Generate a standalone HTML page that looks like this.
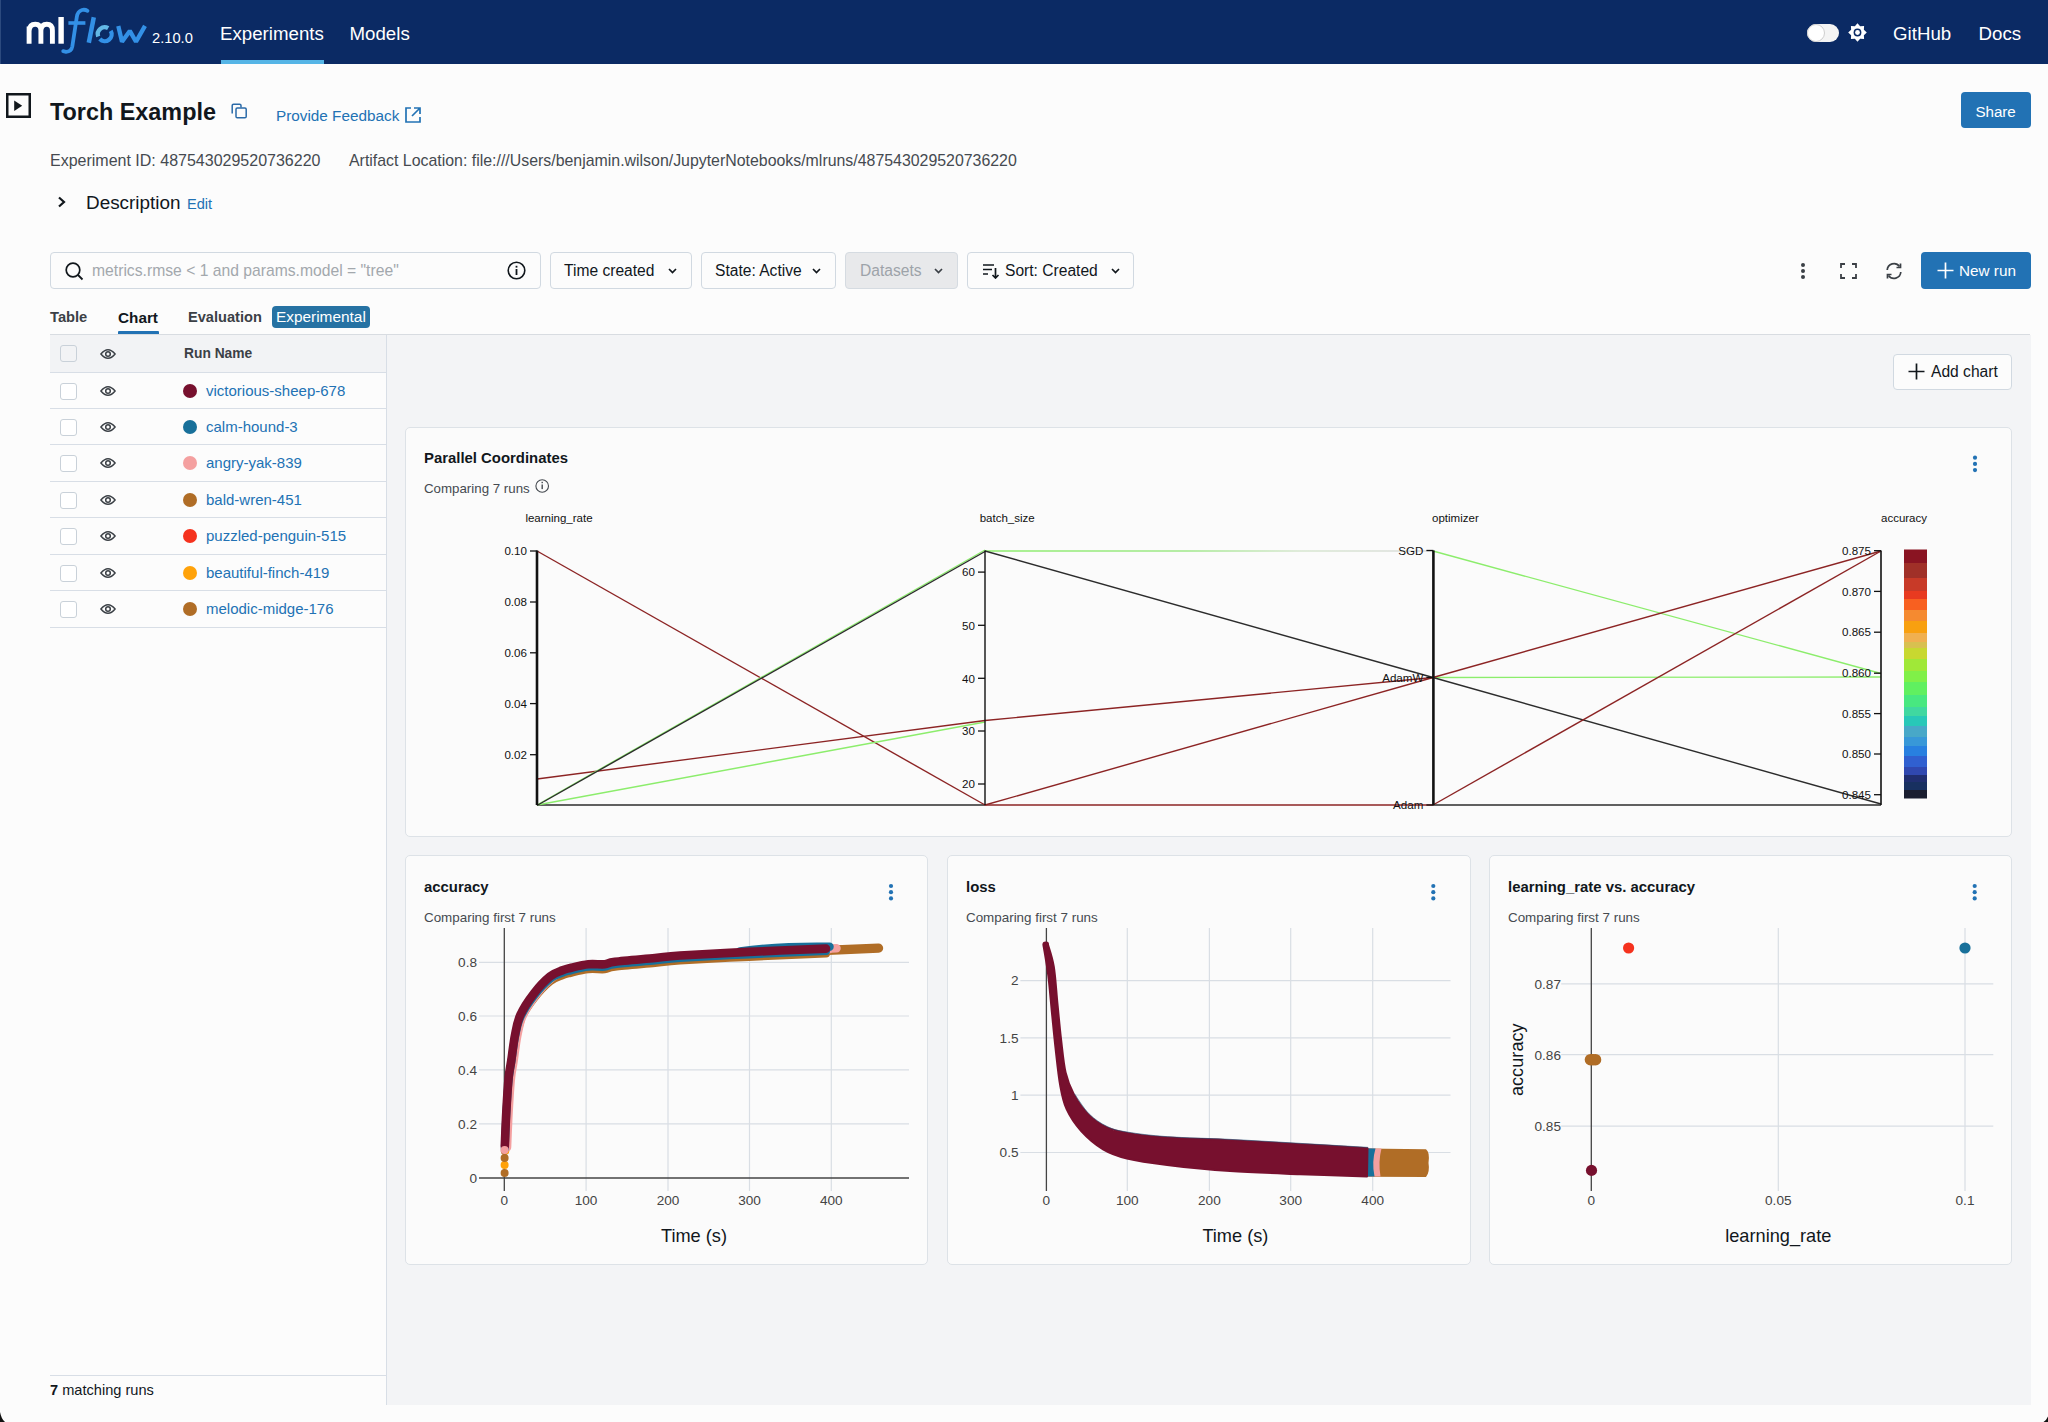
<!DOCTYPE html>
<html><head><meta charset="utf-8">
<style>
*{box-sizing:border-box;margin:0;padding:0}
html,body{width:2048px;height:1422px;overflow:hidden;background:#fcfcfc;font-family:"Liberation Sans",sans-serif;color:#11171c}
.a{position:absolute;white-space:nowrap}
#hdr{position:absolute;left:0;top:0;width:2048px;height:64px;background:#0b2a64}
.nav{color:#fff;font-size:18.7px;line-height:20px;margin-top:1px}
.btn{position:absolute;border:1px solid #d1d9e1;border-radius:4px;background:#fcfcfc}
.bt{position:absolute;font-size:15.6px;line-height:18px;color:#11171c;white-space:nowrap}
.chev{position:absolute;width:9px;height:6px}
.row{position:absolute;left:50px;width:336px;height:36.5px;border-bottom:1px solid #d8dee6}
.cb{position:absolute;left:59.5px;width:17px;height:17px;border:1.5px solid #c9d1d9;border-radius:3px;background:#fff}
.eye{position:absolute;left:100px;width:16px;height:12px}
.dot{position:absolute;left:183px;width:14px;height:14px;border-radius:50%}
.rn{position:absolute;left:206px;font-size:15px;line-height:18px;color:#2272b4;white-space:nowrap}
.card{position:absolute;background:#fbfbfb;border:1px solid #dde2e7;border-radius:5px}
.ct{position:absolute;font-weight:bold;font-size:14.5px;line-height:17px;color:#11171c;white-space:nowrap}
.cs{position:absolute;font-size:13.4px;line-height:16px;color:#454a50;white-space:nowrap}
.keb{position:absolute;width:4px;height:16px}
.keb i{position:absolute;left:0;width:4px;height:4px;border-radius:50%;background:#2272b4}
</style></head><body>

<!-- HEADER -->
<div id="hdr">
  <div class="a" style="left:0;top:0;width:1px;height:64px;background:#2c4a7e"></div>
  <!-- logo -->
  <svg class="a" style="left:0;top:0" width="150" height="64" viewBox="0 0 150 64">
    <path d="M29.1,43.7 V26.5 M29.1,31 Q29.5,24.3 35.3,24.3 Q40.9,24.3 40.9,30.5 V43.7 M40.9,30.5 Q41.2,24.3 46.8,24.3 Q52.4,24.3 52.4,30.5 V43.7" fill="none" stroke="#fff" stroke-width="4.9"/>
    <rect x="58.4" y="17" width="5.4" height="26.7" fill="#fff"/>
    <path d="M87.5,10.8 Q85,9.3 82,10 Q77.6,11.3 76.8,17 L72.3,46.5 Q71.4,51.6 66,51.8 L63.2,51.2" fill="none" stroke="#3390e6" stroke-width="3.8" stroke-linecap="round"/>
    <path d="M68.4,23 H85.4" stroke="#3390e6" stroke-width="3.6"/>
    <path d="M93.8,17.2 L88.8,42.7" stroke="#3390e6" stroke-width="4.5"/>
    <path d="M98.2,36.5 A6.9,6.9 0 0 1 108.2,28.2" fill="none" stroke="#63b8e6" stroke-width="4.3"/>
    <path d="M110.7,30.8 A6.9,6.9 0 0 1 99.8,39.1" fill="none" stroke="#3390e6" stroke-width="4.3"/>
    <path d="M118.3,25.9 L122,41.8 L129.8,30.9 L136,41.8 L145,25.9" fill="none" stroke="#3390e6" stroke-width="4.3" stroke-linejoin="bevel"/>
  </svg>
  <div class="a" style="left:152px;top:30px;font-size:14.7px;line-height:16px;color:#fff">2.10.0</div>
  <div class="a nav" style="left:220px;top:23px">Experiments</div>
  <div class="a" style="left:221px;top:60px;width:103px;height:4px;background:#55b5e6"></div>
  <div class="a nav" style="left:349.5px;top:23px">Models</div>
  <!-- toggle -->
  <div class="a" style="left:1807px;top:24px;width:32px;height:18px;border-radius:9px;background:#f4f4f4"></div>
  <div class="a" style="left:1807px;top:24px;width:18px;height:18px;border-radius:50%;background:#fff;border:1px solid #cfcfcf"></div>
  <svg class="a" style="left:1848px;top:23px" width="19" height="19" viewBox="0 0 19 19">
    <polygon fill="#fff" points="9.50,0.20 6.86,3.13 2.92,2.92 3.13,6.86 0.20,9.50 3.13,12.14 2.92,16.08 6.86,15.87 9.50,18.80 12.14,15.87 16.08,16.08 15.87,12.14 18.80,9.50 15.87,6.86 16.08,2.92 12.14,3.13"/>
    <circle cx="9.5" cy="9.5" r="3.9" fill="#0b2a64"/><circle cx="9.5" cy="9.5" r="2.4" fill="#fff"/>
  </svg>
  <div class="a nav" style="left:1893px;top:23px">GitHub</div>
  <div class="a nav" style="left:1978.5px;top:23px">Docs</div>
</div>

<!-- PAGE HEADER -->
<svg class="a" style="left:6px;top:93px" width="25" height="25" viewBox="0 0 25 25">
  <rect x="1.25" y="1.25" width="22.5" height="22.5" fill="none" stroke="#11171c" stroke-width="2.5"/>
  <polygon points="8.2,7.6 8.2,18 16.2,12.8" fill="#11171c"/>
</svg>
<div class="a" style="left:50px;top:99px;font-size:23.4px;line-height:27px;font-weight:bold;color:#11171c">Torch Example</div>
<svg class="a" style="left:231px;top:103px" width="17" height="16" viewBox="0 0 17 16">
  <path d="M1.2,10.5 V2.6 Q1.2,1.2 2.6,1.2 H8.6 Q10,1.2 10,2.6 V4.6" fill="none" stroke="#2a6aa8" stroke-width="1.5"/>
  <rect x="5" y="5" width="10.2" height="9.8" rx="1.3" fill="none" stroke="#2a6aa8" stroke-width="1.5"/>
</svg>
<div class="a" style="left:276px;top:107px;font-size:15.3px;line-height:18px;color:#2272b4">Provide Feedback</div>
<svg class="a" style="left:404px;top:106px" width="18" height="18" viewBox="0 0 18 18">
  <path d="M7,2 H2 V16 H16 V11" fill="none" stroke="#2272b4" stroke-width="1.7"/>
  <path d="M10,2 H16 V8 M16,2 L8,10" fill="none" stroke="#2272b4" stroke-width="1.7"/>
</svg>
<div class="a" style="left:1961px;top:92px;width:70px;height:36px;background:#2272b4;border-radius:4px"></div>
<div class="a" style="left:1975.5px;top:103px;font-size:15.2px;line-height:17px;color:#fff;letter-spacing:-0.1px">Share</div>

<div class="a" style="left:50px;top:152.5px;font-size:16px;line-height:16px;color:#454a50">Experiment ID: 487543029520736220</div>
<div class="a" style="left:349px;top:152.5px;font-size:15.9px;line-height:16px;color:#454a50">Artifact Location: file:///Users/benjamin.wilson/JupyterNotebooks/mlruns/487543029520736220</div>

<svg class="a" style="left:57px;top:196px" width="10" height="12" viewBox="0 0 10 12">
  <path d="M2,1.5 L7,6 L2,10.5" fill="none" stroke="#11171c" stroke-width="2.2"/>
</svg>
<div class="a" style="left:86px;top:193px;font-size:18.9px;line-height:20px;color:#11171c">Description</div>
<div class="a" style="left:187px;top:196px;font-size:14.6px;line-height:17px;color:#2272b4">Edit</div>

<!-- TOOLBAR -->
<div class="btn" style="left:50px;top:252px;width:491px;height:37px"></div>
<svg class="a" style="left:65px;top:262px" width="19" height="19" viewBox="0 0 19 19">
  <circle cx="8" cy="8" r="6.8" fill="none" stroke="#11171c" stroke-width="1.7"/>
  <path d="M13,13 L17.5,17.5" stroke="#11171c" stroke-width="1.8"/>
</svg>
<div class="a" style="left:92px;top:262px;font-size:15.7px;line-height:18px;color:#a3a8ad">metrics.rmse &lt; 1 and params.model = "tree"</div>
<svg class="a" style="left:507px;top:261px" width="19" height="19" viewBox="0 0 19 19">
  <circle cx="9.5" cy="9.5" r="8.3" fill="none" stroke="#11171c" stroke-width="1.6"/>
  <rect x="8.6" y="8" width="1.8" height="6" fill="#11171c"/><rect x="8.6" y="4.8" width="1.8" height="1.8" fill="#11171c"/>
</svg>

<div class="btn" style="left:550px;top:252px;width:142px;height:37px"></div>
<div class="bt" style="left:564px;top:262px">Time created</div>
<svg class="chev" style="left:668px;top:268px" viewBox="0 0 9 6"><path d="M1,1 L4.5,4.5 L8,1" fill="none" stroke="#11171c" stroke-width="1.7"/></svg>

<div class="btn" style="left:701px;top:252px;width:135px;height:37px"></div>
<div class="bt" style="left:715px;top:262px">State: Active</div>
<svg class="chev" style="left:812px;top:268px" viewBox="0 0 9 6"><path d="M1,1 L4.5,4.5 L8,1" fill="none" stroke="#11171c" stroke-width="1.7"/></svg>

<div class="btn" style="left:845px;top:252px;width:113px;height:37px;background:#e8e9eb;border-color:#d5dbe1"></div>
<div class="bt" style="left:860px;top:262px;color:#9da3a9">Datasets</div>
<svg class="chev" style="left:934px;top:268px" viewBox="0 0 9 6"><path d="M1,1 L4.5,4.5 L8,1" fill="none" stroke="#3b4046" stroke-width="1.7"/></svg>

<div class="btn" style="left:967px;top:252px;width:167px;height:37px"></div>
<svg class="a" style="left:982px;top:263px" width="18" height="16" viewBox="0 0 18 16">
  <path d="M1,2 H12 M1,6.5 H10 M1,11 H6" stroke="#11171c" stroke-width="1.7"/>
  <path d="M13.5,5 V15 M10.5,12 L13.5,15 L16.5,12" fill="none" stroke="#11171c" stroke-width="1.7"/>
</svg>
<div class="bt" style="left:1005px;top:262px">Sort: Created</div>
<svg class="chev" style="left:1111px;top:268px" viewBox="0 0 9 6"><path d="M1,1 L4.5,4.5 L8,1" fill="none" stroke="#11171c" stroke-width="1.7"/></svg>

<!-- right icons -->
<div class="a" style="left:1800.5px;top:262.5px;width:4.5px;height:4.5px;border-radius:50%;background:#3b4046"></div>
<div class="a" style="left:1800.5px;top:268.5px;width:4.5px;height:4.5px;border-radius:50%;background:#3b4046"></div>
<div class="a" style="left:1800.5px;top:274.5px;width:4.5px;height:4.5px;border-radius:50%;background:#3b4046"></div>
<svg class="a" style="left:1840px;top:263px" width="17" height="16" viewBox="0 0 17 16">
  <path d="M1,5 V1 H5 M12,1 H16 V5 M16,11 V15 H12 M5,15 H1 V11" fill="none" stroke="#3b4046" stroke-width="1.8"/>
</svg>
<svg class="a" style="left:1885px;top:262px" width="18" height="18" viewBox="0 0 18 18">
  <path d="M2.2,8 A6.8,6.8 0 0 1 14.5,4.5" fill="none" stroke="#3b4046" stroke-width="1.7"/>
  <path d="M15.8,10 A6.8,6.8 0 0 1 3.5,13.5" fill="none" stroke="#3b4046" stroke-width="1.7"/>
  <path d="M15.5,1.5 V5.5 H11.5" fill="none" stroke="#3b4046" stroke-width="1.7"/>
  <path d="M2.5,16.5 V12.5 H6.5" fill="none" stroke="#3b4046" stroke-width="1.7"/>
</svg>
<div class="a" style="left:1921px;top:252px;width:110px;height:37px;background:#2272b4;border-radius:4px"></div>
<svg class="a" style="left:1937px;top:262px" width="17" height="17" viewBox="0 0 17 17">
  <path d="M8.5,0.5 V16.5 M0.5,8.5 H16.5" stroke="#fff" stroke-width="1.7"/>
</svg>
<div class="a" style="left:1959px;top:262px;font-size:15.3px;line-height:18px;color:#fff">New run</div>

<!-- TABS -->
<div class="a" style="left:50px;top:308.5px;font-size:14.7px;line-height:17px;font-weight:bold;color:#3b4046">Table</div>
<div class="a" style="left:118px;top:308.5px;font-size:15.3px;line-height:17px;font-weight:bold;color:#11171c">Chart</div>
<div class="a" style="left:118px;top:331px;width:41px;height:4px;background:#2272b4;border-radius:1px"></div>
<div class="a" style="left:188px;top:308.5px;font-size:14.6px;line-height:17px;font-weight:bold;color:#3b4046">Evaluation</div>
<div class="a" style="left:272px;top:305.5px;width:98px;height:22.5px;background:#2672a3;border-radius:4px"></div>
<div class="a" style="left:276px;top:308px;font-size:15.4px;line-height:17px;color:#fff">Experimental</div>
<div class="a" style="left:50px;top:334px;width:1980px;height:1px;background:#d8dce1"></div>

<!-- LEFT TABLE -->
<div class="a" style="left:50px;top:335px;width:336px;height:37.5px;background:#f2f3f5;border-bottom:1px solid #d8dee6"></div>
<div class="a" style="left:386px;top:335px;width:1px;height:1070px;background:#d8dee6"></div>
<div class="cb" style="top:345px;background:#f2f3f5"></div>
<svg class="eye" style="top:347.5px" viewBox="0 0 16 12"><path d="M0.9,6 Q8,-2.6 15.1,6 Q8,14.6 0.9,6 Z" fill="none" stroke="#3b4046" stroke-width="1.5" stroke-linejoin="round"/><circle cx="8" cy="6" r="2.3" fill="none" stroke="#3b4046" stroke-width="1.5"/></svg>
<div class="a" style="left:184px;top:346px;font-size:13.8px;line-height:16px;font-weight:bold;color:#3b4046">Run Name</div>

<div class="row" style="top:372.50px"></div>
<div class="cb" style="top:382.50px"></div>
<svg class="eye" style="top:384.50px" viewBox="0 0 16 12"><path d="M0.9,6 Q8,-2.6 15.1,6 Q8,14.6 0.9,6 Z" fill="none" stroke="#3b4046" stroke-width="1.5" stroke-linejoin="round"/><circle cx="8" cy="6" r="2.3" fill="none" stroke="#3b4046" stroke-width="1.5"/></svg>
<div class="dot" style="top:383.50px;background:#77102e"></div>
<div class="rn" style="top:381.50px">victorious-sheep-678</div>
<div class="row" style="top:408.95px"></div>
<div class="cb" style="top:418.95px"></div>
<svg class="eye" style="top:420.95px" viewBox="0 0 16 12"><path d="M0.9,6 Q8,-2.6 15.1,6 Q8,14.6 0.9,6 Z" fill="none" stroke="#3b4046" stroke-width="1.5" stroke-linejoin="round"/><circle cx="8" cy="6" r="2.3" fill="none" stroke="#3b4046" stroke-width="1.5"/></svg>
<div class="dot" style="top:419.95px;background:#18709a"></div>
<div class="rn" style="top:417.95px">calm-hound-3</div>
<div class="row" style="top:445.40px"></div>
<div class="cb" style="top:455.40px"></div>
<svg class="eye" style="top:457.40px" viewBox="0 0 16 12"><path d="M0.9,6 Q8,-2.6 15.1,6 Q8,14.6 0.9,6 Z" fill="none" stroke="#3b4046" stroke-width="1.5" stroke-linejoin="round"/><circle cx="8" cy="6" r="2.3" fill="none" stroke="#3b4046" stroke-width="1.5"/></svg>
<div class="dot" style="top:456.40px;background:#f4a0a0"></div>
<div class="rn" style="top:454.40px">angry-yak-839</div>
<div class="row" style="top:481.85px"></div>
<div class="cb" style="top:491.85px"></div>
<svg class="eye" style="top:493.85px" viewBox="0 0 16 12"><path d="M0.9,6 Q8,-2.6 15.1,6 Q8,14.6 0.9,6 Z" fill="none" stroke="#3b4046" stroke-width="1.5" stroke-linejoin="round"/><circle cx="8" cy="6" r="2.3" fill="none" stroke="#3b4046" stroke-width="1.5"/></svg>
<div class="dot" style="top:492.85px;background:#b06d26"></div>
<div class="rn" style="top:490.85px">bald-wren-451</div>
<div class="row" style="top:518.30px"></div>
<div class="cb" style="top:528.30px"></div>
<svg class="eye" style="top:530.30px" viewBox="0 0 16 12"><path d="M0.9,6 Q8,-2.6 15.1,6 Q8,14.6 0.9,6 Z" fill="none" stroke="#3b4046" stroke-width="1.5" stroke-linejoin="round"/><circle cx="8" cy="6" r="2.3" fill="none" stroke="#3b4046" stroke-width="1.5"/></svg>
<div class="dot" style="top:529.30px;background:#f5321e"></div>
<div class="rn" style="top:527.30px">puzzled-penguin-515</div>
<div class="row" style="top:554.75px"></div>
<div class="cb" style="top:564.75px"></div>
<svg class="eye" style="top:566.75px" viewBox="0 0 16 12"><path d="M0.9,6 Q8,-2.6 15.1,6 Q8,14.6 0.9,6 Z" fill="none" stroke="#3b4046" stroke-width="1.5" stroke-linejoin="round"/><circle cx="8" cy="6" r="2.3" fill="none" stroke="#3b4046" stroke-width="1.5"/></svg>
<div class="dot" style="top:565.75px;background:#ffa20a"></div>
<div class="rn" style="top:563.75px">beautiful-finch-419</div>
<div class="row" style="top:591.20px"></div>
<div class="cb" style="top:601.20px"></div>
<svg class="eye" style="top:603.20px" viewBox="0 0 16 12"><path d="M0.9,6 Q8,-2.6 15.1,6 Q8,14.6 0.9,6 Z" fill="none" stroke="#3b4046" stroke-width="1.5" stroke-linejoin="round"/><circle cx="8" cy="6" r="2.3" fill="none" stroke="#3b4046" stroke-width="1.5"/></svg>
<div class="dot" style="top:602.20px;background:#b06d26"></div>
<div class="rn" style="top:600.20px">melodic-midge-176</div>

<div class="a" style="left:50px;top:1374.5px;width:336px;height:1px;background:#d8dee6"></div>
<div class="a" style="left:50px;top:1382px;font-size:14.6px;line-height:17px;color:#11171c"><b>7</b> matching runs</div>

<!-- CHART AREA -->
<div class="a" style="left:387px;top:335px;width:1644px;height:1070px;background:#f3f4f6"></div>
<div class="btn" style="left:1893px;top:354px;width:119px;height:36px"></div>
<svg class="a" style="left:1908px;top:363px" width="17" height="17" viewBox="0 0 17 17">
  <path d="M8.5,0.5 V16.5 M0.5,8.5 H16.5" stroke="#11171c" stroke-width="1.7"/>
</svg>
<div class="a" style="left:1931px;top:363px;font-size:15.6px;line-height:18px;color:#11171c">Add chart</div>

<div class="card" style="left:405px;top:427px;width:1607px;height:410px"></div>
<div class="card" style="left:405px;top:855px;width:523px;height:410px"></div>
<div class="card" style="left:946.5px;top:855px;width:524px;height:410px"></div>
<div class="card" style="left:1489px;top:855px;width:523px;height:410px"></div>

<div id="charts"><svg class="a" style="left:0;top:0" width="2048" height="1422" viewBox="0 0 2048 1422" font-family="Liberation Sans, sans-serif">
<defs><linearGradient id="cbar" x1="0" y1="0" x2="0" y2="1">
<stop offset="0.0" stop-color="#8a1422"/>
<stop offset="0.0532" stop-color="#8a1422"/>
<stop offset="0.0532" stop-color="#a03028"/>
<stop offset="0.1141" stop-color="#a03028"/>
<stop offset="0.1141" stop-color="#c83a28"/>
<stop offset="0.1673" stop-color="#c83a28"/>
<stop offset="0.1673" stop-color="#e83a20"/>
<stop offset="0.1977" stop-color="#e83a20"/>
<stop offset="0.1977" stop-color="#f86020"/>
<stop offset="0.2433" stop-color="#f86020"/>
<stop offset="0.2433" stop-color="#f58a30"/>
<stop offset="0.289" stop-color="#f58a30"/>
<stop offset="0.289" stop-color="#f8a010"/>
<stop offset="0.3346" stop-color="#f8a010"/>
<stop offset="0.3346" stop-color="#f0b050"/>
<stop offset="0.3726" stop-color="#f0b050"/>
<stop offset="0.3726" stop-color="#d8c050"/>
<stop offset="0.3954" stop-color="#d8c050"/>
<stop offset="0.3954" stop-color="#c8d830"/>
<stop offset="0.4411" stop-color="#c8d830"/>
<stop offset="0.4411" stop-color="#a0e838"/>
<stop offset="0.4867" stop-color="#a0e838"/>
<stop offset="0.4867" stop-color="#80f048"/>
<stop offset="0.5323" stop-color="#80f048"/>
<stop offset="0.5323" stop-color="#60f060"/>
<stop offset="0.5856" stop-color="#60f060"/>
<stop offset="0.5856" stop-color="#48e880"/>
<stop offset="0.6312" stop-color="#48e880"/>
<stop offset="0.6312" stop-color="#40d8a0"/>
<stop offset="0.6692" stop-color="#40d8a0"/>
<stop offset="0.6692" stop-color="#28c8b8"/>
<stop offset="0.7072" stop-color="#28c8b8"/>
<stop offset="0.7072" stop-color="#48a8c8"/>
<stop offset="0.7529" stop-color="#48a8c8"/>
<stop offset="0.7529" stop-color="#3898d8"/>
<stop offset="0.7909" stop-color="#3898d8"/>
<stop offset="0.7909" stop-color="#2880e0"/>
<stop offset="0.8289" stop-color="#2880e0"/>
<stop offset="0.8289" stop-color="#3060d0"/>
<stop offset="0.8745" stop-color="#3060d0"/>
<stop offset="0.8745" stop-color="#3048b0"/>
<stop offset="0.9049" stop-color="#3048b0"/>
<stop offset="0.9049" stop-color="#202e70"/>
<stop offset="0.9354" stop-color="#202e70"/>
<stop offset="0.9354" stop-color="#183060"/>
<stop offset="0.9658" stop-color="#183060"/>
<stop offset="0.9658" stop-color="#1a1e30"/>
<stop offset="1.0" stop-color="#1a1e30"/>
</linearGradient><linearGradient id="gfade" gradientUnits="userSpaceOnUse" x1="985" y1="0" x2="1433" y2="0"><stop offset="0" stop-color="#8ced6c"/><stop offset="0.45" stop-color="#9fe889"/><stop offset="0.7" stop-color="#d6e6cf"/><stop offset="1" stop-color="#dcdcdc"/></linearGradient></defs>
<text x="424" y="463" font-size="14.9" font-weight="bold" fill="#11171c">Parallel Coordinates</text>
<text x="424" y="492.7" font-size="13.3" fill="#454a50">Comparing 7 runs</text>
<circle cx="542.2" cy="486" r="6.3" fill="none" stroke="#454a50" stroke-width="1.1"/><rect x="541.5" y="484.5" width="1.4" height="4.6" fill="#454a50"/><rect x="541.5" y="481.8" width="1.4" height="1.4" fill="#454a50"/>
<circle cx="1975" cy="457.7" r="2.1" fill="#2272b4"/>
<circle cx="1975" cy="463.9" r="2.1" fill="#2272b4"/>
<circle cx="1975" cy="470.1" r="2.1" fill="#2272b4"/>
<line x1="537" y1="805" x2="985" y2="805" stroke="#2c2c2c" stroke-width="1.4"/>
<line x1="537" y1="551" x2="985" y2="805" stroke="#8c2424" stroke-width="1.4"/>
<line x1="537" y1="805" x2="985" y2="722" stroke="#8ced6c" stroke-width="1.4"/>
<line x1="537" y1="779" x2="985" y2="720.5" stroke="#8c2424" stroke-width="1.4"/>
<line x1="537" y1="805" x2="985" y2="550" stroke="#8ced6c" stroke-width="1.4"/>
<line x1="537" y1="805.5" x2="985" y2="551.5" stroke="#2c2c2c" stroke-width="1.4"/>
<line x1="985" y1="551" x2="1433" y2="551.01" stroke="url(#gfade)" stroke-width="1.4"/>
<line x1="985" y1="805" x2="1433" y2="805" stroke="#8c2424" stroke-width="1.4"/>
<line x1="985" y1="551" x2="1433" y2="677.5" stroke="#2c2c2c" stroke-width="1.4"/>
<line x1="985" y1="720.5" x2="1433" y2="677.5" stroke="#8c2424" stroke-width="1.4"/>
<line x1="985" y1="805" x2="1433" y2="677.5" stroke="#8c2424" stroke-width="1.4"/>
<line x1="1433" y1="805" x2="1881" y2="805" stroke="#2c2c2c" stroke-width="1.4"/>
<line x1="1433" y1="551" x2="1881" y2="673.5" stroke="#8ced6c" stroke-width="1.4"/>
<line x1="1433" y1="677.5" x2="1881" y2="677" stroke="#8ced6c" stroke-width="1.4"/>
<line x1="1433" y1="677.5" x2="1881" y2="804" stroke="#2c2c2c" stroke-width="1.4"/>
<line x1="1433" y1="677.5" x2="1881" y2="551" stroke="#8c2424" stroke-width="1.4"/>
<line x1="1433" y1="805" x2="1881" y2="551" stroke="#8c2424" stroke-width="1.4"/>
<line x1="537" y1="550.5" x2="537" y2="805" stroke="#111" stroke-width="2.6"/>
<line x1="985" y1="550.5" x2="985" y2="805" stroke="#111" stroke-width="1.4"/>
<line x1="1433.4" y1="550.5" x2="1433.4" y2="805" stroke="#111" stroke-width="2.6"/>
<line x1="1881" y1="550.5" x2="1881" y2="805" stroke="#111" stroke-width="1.6"/>
<line x1="530" y1="551" x2="537" y2="551" stroke="#111" stroke-width="1.3"/>
<text x="527" y="555.2" font-size="11.6" text-anchor="end" fill="#111">0.10</text>
<line x1="530" y1="602" x2="537" y2="602" stroke="#111" stroke-width="1.3"/>
<text x="527" y="606.2" font-size="11.6" text-anchor="end" fill="#111">0.08</text>
<line x1="530" y1="652.8" x2="537" y2="652.8" stroke="#111" stroke-width="1.3"/>
<text x="527" y="657.0" font-size="11.6" text-anchor="end" fill="#111">0.06</text>
<line x1="530" y1="703.6" x2="537" y2="703.6" stroke="#111" stroke-width="1.3"/>
<text x="527" y="707.8" font-size="11.6" text-anchor="end" fill="#111">0.04</text>
<line x1="530" y1="754.7" x2="537" y2="754.7" stroke="#111" stroke-width="1.3"/>
<text x="527" y="758.9" font-size="11.6" text-anchor="end" fill="#111">0.02</text>
<line x1="978" y1="572.1" x2="985" y2="572.1" stroke="#111" stroke-width="1.3"/>
<text x="975" y="576.3" font-size="11.6" text-anchor="end" fill="#111">60</text>
<line x1="978" y1="625.3" x2="985" y2="625.3" stroke="#111" stroke-width="1.3"/>
<text x="975" y="629.5" font-size="11.6" text-anchor="end" fill="#111">50</text>
<line x1="978" y1="678.3" x2="985" y2="678.3" stroke="#111" stroke-width="1.3"/>
<text x="975" y="682.5" font-size="11.6" text-anchor="end" fill="#111">40</text>
<line x1="978" y1="731" x2="985" y2="731" stroke="#111" stroke-width="1.3"/>
<text x="975" y="735.2" font-size="11.6" text-anchor="end" fill="#111">30</text>
<line x1="978" y1="784" x2="985" y2="784" stroke="#111" stroke-width="1.3"/>
<text x="975" y="788.2" font-size="11.6" text-anchor="end" fill="#111">20</text>
<line x1="1426.4" y1="550.5" x2="1433.4" y2="550.5" stroke="#111" stroke-width="1.3"/>
<text x="1423.4" y="554.7" font-size="11.6" text-anchor="end" fill="#111">SGD</text>
<line x1="1426.4" y1="677.5" x2="1433.4" y2="677.5" stroke="#111" stroke-width="1.3"/>
<text x="1423.4" y="681.7" font-size="11.6" text-anchor="end" fill="#111">AdamW</text>
<line x1="1426.4" y1="805" x2="1433.4" y2="805" stroke="#111" stroke-width="1.3"/>
<text x="1423.4" y="809.2" font-size="11.6" text-anchor="end" fill="#111">Adam</text>
<line x1="1874" y1="550.7" x2="1881" y2="550.7" stroke="#111" stroke-width="1.3"/>
<text x="1871" y="554.9" font-size="11.6" text-anchor="end" fill="#111">0.875</text>
<line x1="1874" y1="591.4" x2="1881" y2="591.4" stroke="#111" stroke-width="1.3"/>
<text x="1871" y="595.6" font-size="11.6" text-anchor="end" fill="#111">0.870</text>
<line x1="1874" y1="632.2" x2="1881" y2="632.2" stroke="#111" stroke-width="1.3"/>
<text x="1871" y="636.4" font-size="11.6" text-anchor="end" fill="#111">0.865</text>
<line x1="1874" y1="673.2" x2="1881" y2="673.2" stroke="#111" stroke-width="1.3"/>
<text x="1871" y="677.4" font-size="11.6" text-anchor="end" fill="#111">0.860</text>
<line x1="1874" y1="713.6" x2="1881" y2="713.6" stroke="#111" stroke-width="1.3"/>
<text x="1871" y="717.8" font-size="11.6" text-anchor="end" fill="#111">0.855</text>
<line x1="1874" y1="754" x2="1881" y2="754" stroke="#111" stroke-width="1.3"/>
<text x="1871" y="758.2" font-size="11.6" text-anchor="end" fill="#111">0.850</text>
<line x1="1874" y1="794.7" x2="1881" y2="794.7" stroke="#111" stroke-width="1.3"/>
<text x="1871" y="798.9" font-size="11.6" text-anchor="end" fill="#111">0.845</text>
<text x="559" y="521.5" font-size="11.5" text-anchor="middle" fill="#111">learning_rate</text>
<text x="1007.2" y="521.5" font-size="11.5" text-anchor="middle" fill="#111">batch_size</text>
<text x="1455.4" y="521.5" font-size="11.5" text-anchor="middle" fill="#111">optimizer</text>
<text x="1904" y="521.5" font-size="11.5" text-anchor="middle" fill="#111">accuracy</text>
<rect x="1904" y="549.5" width="23" height="249" fill="url(#cbar)"/>
<text x="424" y="891.5" font-size="14.9" font-weight="bold" fill="#11171c">accuracy</text>
<text x="424" y="921.6" font-size="13.4" fill="#454a50">Comparing first 7 runs</text>
<circle cx="891" cy="886.0" r="2.1" fill="#2272b4"/>
<circle cx="891" cy="892.2" r="2.1" fill="#2272b4"/>
<circle cx="891" cy="898.4" r="2.1" fill="#2272b4"/>
<line x1="479" y1="962.3" x2="909" y2="962.3" stroke="#d9dee4" stroke-width="1.2"/>
<line x1="479" y1="1016" x2="909" y2="1016" stroke="#d9dee4" stroke-width="1.2"/>
<line x1="479" y1="1069.8" x2="909" y2="1069.8" stroke="#d9dee4" stroke-width="1.2"/>
<line x1="479" y1="1123.9" x2="909" y2="1123.9" stroke="#d9dee4" stroke-width="1.2"/>
<line x1="586.1" y1="928" x2="586.1" y2="1191" stroke="#d9dee4" stroke-width="1.2"/>
<line x1="668" y1="928" x2="668" y2="1191" stroke="#d9dee4" stroke-width="1.2"/>
<line x1="749.5" y1="928" x2="749.5" y2="1191" stroke="#d9dee4" stroke-width="1.2"/>
<line x1="831.3" y1="928" x2="831.3" y2="1191" stroke="#d9dee4" stroke-width="1.2"/>
<line x1="479" y1="1178" x2="909" y2="1178" stroke="#444" stroke-width="1.3"/>
<line x1="504.3" y1="928" x2="504.3" y2="1191" stroke="#444" stroke-width="1.3"/>
<text x="477" y="967.1" font-size="13.6" text-anchor="end" fill="#444">0.8</text>
<text x="477" y="1020.8" font-size="13.6" text-anchor="end" fill="#444">0.6</text>
<text x="477" y="1074.6" font-size="13.6" text-anchor="end" fill="#444">0.4</text>
<text x="477" y="1128.7" font-size="13.6" text-anchor="end" fill="#444">0.2</text>
<text x="477" y="1182.8" font-size="13.6" text-anchor="end" fill="#444">0</text>
<text x="504.3" y="1205.3" font-size="13.6" text-anchor="middle" fill="#444">0</text>
<text x="586.1" y="1205.3" font-size="13.6" text-anchor="middle" fill="#444">100</text>
<text x="668" y="1205.3" font-size="13.6" text-anchor="middle" fill="#444">200</text>
<text x="749.5" y="1205.3" font-size="13.6" text-anchor="middle" fill="#444">300</text>
<text x="831.3" y="1205.3" font-size="13.6" text-anchor="middle" fill="#444">400</text>
<text x="694" y="1242.3" font-size="18.2" text-anchor="middle" fill="#11171c">Time (s)</text>
<path d="M504.8,1151 C505.05,1145.33 505.67,1128.33 506.3,1117 C506.93,1105.67 507.78,1091.5 508.6,1083 C509.42,1074.5 510.13,1073.17 511.2,1066 C512.27,1058.83 513.47,1047.7 515,1040 C516.53,1032.3 517.23,1026.75 520.4,1019.8 C523.57,1012.85 529.05,1004.7 534,998.3 C538.95,991.9 545.35,985.23 550.1,981.4 C554.85,977.57 559.13,976.7 562.5,975.3 C565.87,973.9 566,974 570.3,973 C574.6,972 582.57,969.92 588.3,969.3 C594.03,968.68 600.25,969.72 604.7,969.3 C609.15,968.88 606.62,967.85 615,966.8 C623.38,965.75 644.17,964.05 655,963 C665.83,961.95 664.33,961.52 680,960.5 C695.67,959.48 724.67,958.05 749,956.9 C773.33,955.75 813.17,954.15 826,953.6" fill="none" stroke="#b06d26" stroke-width="8" stroke-linecap="round" stroke-linejoin="round"/>
<path d="M800,951.5 L878.5,948.1" fill="none" stroke="#b06d26" stroke-width="9.4" stroke-linecap="round"/>
<path d="M506.3,1151 C506.55,1145.33 507.17,1128.33 507.8,1117 C508.43,1105.67 509.28,1091.5 510.1,1083 C510.92,1074.5 511.63,1073.17 512.7,1066 C513.77,1058.83 514.97,1047.7 516.5,1040 C518.03,1032.3 521,1023.17 521.9,1019.8" fill="none" stroke="#ffa20a" stroke-width="6" stroke-linecap="round"/>
<path d="M507.3,1147 C507.55,1141.33 508.17,1124.33 508.8,1113 C509.43,1101.67 510.28,1087.5 511.1,1079 C511.92,1070.5 512.63,1069.17 513.7,1062 C514.77,1054.83 515.97,1043.7 517.5,1036 C519.03,1028.3 519.73,1022.75 522.9,1015.8 C526.07,1008.85 531.55,1000.7 536.5,994.3 C541.45,987.9 547.85,981.23 552.6,977.4 C557.35,973.57 561.63,972.7 565,971.3 C568.37,969.9 568.5,970 572.8,969 C577.1,968 585.07,965.92 590.8,965.3 C596.53,964.68 602.75,965.72 607.2,965.3 C611.65,964.88 609.12,963.85 617.5,962.8 C625.88,961.75 646.67,960.05 657.5,959 C668.33,957.95 666.83,957.52 682.5,956.5 C698.17,955.48 727.17,954.05 751.5,952.9 C775.83,951.75 815.67,950.15 828.5,949.6" fill="none" stroke="#f4a0a0" stroke-width="8" stroke-linecap="round" stroke-linejoin="round"/>
<path d="M820,949 L836.5,948.3" fill="none" stroke="#f4a0a0" stroke-width="8.5" stroke-linecap="round"/>
<path d="M504.8,1148.5 C505.05,1142.83 505.67,1125.83 506.3,1114.5 C506.93,1103.17 507.78,1089 508.6,1080.5 C509.42,1072 510.13,1070.67 511.2,1063.5 C512.27,1056.33 513.47,1045.2 515,1037.5 C516.53,1029.8 517.23,1024.25 520.4,1017.3 C523.57,1010.35 529.05,1002.2 534,995.8 C538.95,989.4 545.35,982.73 550.1,978.9 C554.85,975.07 559.13,974.2 562.5,972.8 C565.87,971.4 566,971.5 570.3,970.5 C574.6,969.5 582.57,967.42 588.3,966.8 C594.03,966.18 600.25,967.22 604.7,966.8 C609.15,966.38 606.62,965.35 615,964.3 C623.38,963.25 644.17,961.55 655,960.5 C665.83,959.45 664.33,959.02 680,958 C695.67,956.98 724.67,955.55 749,954.4 C773.33,953.25 813.17,951.65 826,951.1" fill="none" stroke="#18709a" stroke-width="8" stroke-linecap="round" stroke-linejoin="round"/>
<path d="M740,951.5 Q780,946 829.5,946.8" fill="none" stroke="#18709a" stroke-width="8.5" stroke-linecap="round"/>
<path d="M504.8,1146 C505.05,1140.33 505.67,1123.33 506.3,1112 C506.93,1100.67 507.78,1086.5 508.6,1078 C509.42,1069.5 510.13,1068.17 511.2,1061 C512.27,1053.83 513.47,1042.7 515,1035 C516.53,1027.3 517.23,1021.75 520.4,1014.8 C523.57,1007.85 529.05,999.7 534,993.3 C538.95,986.9 545.35,980.23 550.1,976.4 C554.85,972.57 559.13,971.7 562.5,970.3 C565.87,968.9 566,969 570.3,968 C574.6,967 582.57,964.92 588.3,964.3 C594.03,963.68 600.25,964.72 604.7,964.3 C609.15,963.88 606.62,962.85 615,961.8 C623.38,960.75 644.17,959.05 655,958 C665.83,956.95 664.33,956.52 680,955.5 C695.67,954.48 724.67,953.05 749,951.9 C773.33,950.75 813.17,949.15 826,948.6" fill="none" stroke="#77102e" stroke-width="8.6" stroke-linecap="round" stroke-linejoin="round"/>
<circle cx="504.6" cy="1173.1" r="4" fill="#b06d26"/>
<circle cx="504.6" cy="1165" r="4" fill="#ffa20a"/>
<circle cx="504.6" cy="1158" r="4" fill="#b06d26"/>
<circle cx="504.6" cy="1150" r="4" fill="#f4a0a0"/>
<text x="966" y="891.5" font-size="14.9" font-weight="bold" fill="#11171c">loss</text>
<text x="966" y="921.6" font-size="13.4" fill="#454a50">Comparing first 7 runs</text>
<circle cx="1433.3" cy="886.0" r="2.1" fill="#2272b4"/>
<circle cx="1433.3" cy="892.2" r="2.1" fill="#2272b4"/>
<circle cx="1433.3" cy="898.4" r="2.1" fill="#2272b4"/>
<line x1="1020.4" y1="980.6" x2="1450.5" y2="980.6" stroke="#d9dee4" stroke-width="1.2"/>
<line x1="1020.4" y1="1037.9" x2="1450.5" y2="1037.9" stroke="#d9dee4" stroke-width="1.2"/>
<line x1="1020.4" y1="1095.2" x2="1450.5" y2="1095.2" stroke="#d9dee4" stroke-width="1.2"/>
<line x1="1020.4" y1="1152.5" x2="1450.5" y2="1152.5" stroke="#d9dee4" stroke-width="1.2"/>
<line x1="1127.3" y1="928" x2="1127.3" y2="1191" stroke="#d9dee4" stroke-width="1.2"/>
<line x1="1209.4" y1="928" x2="1209.4" y2="1191" stroke="#d9dee4" stroke-width="1.2"/>
<line x1="1290.7" y1="928" x2="1290.7" y2="1191" stroke="#d9dee4" stroke-width="1.2"/>
<line x1="1372.7" y1="928" x2="1372.7" y2="1191" stroke="#d9dee4" stroke-width="1.2"/>
<line x1="1046.4" y1="928" x2="1046.4" y2="1191" stroke="#444" stroke-width="1.3"/>
<text x="1018.5" y="985.4" font-size="13.6" text-anchor="end" fill="#444">2</text>
<text x="1018.5" y="1042.7" font-size="13.6" text-anchor="end" fill="#444">1.5</text>
<text x="1018.5" y="1100.0" font-size="13.6" text-anchor="end" fill="#444">1</text>
<text x="1018.5" y="1157.3" font-size="13.6" text-anchor="end" fill="#444">0.5</text>
<text x="1046.4" y="1205.3" font-size="13.6" text-anchor="middle" fill="#444">0</text>
<text x="1127.3" y="1205.3" font-size="13.6" text-anchor="middle" fill="#444">100</text>
<text x="1209.4" y="1205.3" font-size="13.6" text-anchor="middle" fill="#444">200</text>
<text x="1290.7" y="1205.3" font-size="13.6" text-anchor="middle" fill="#444">300</text>
<text x="1372.7" y="1205.3" font-size="13.6" text-anchor="middle" fill="#444">400</text>
<text x="1235.4" y="1242.3" font-size="18.2" text-anchor="middle" fill="#11171c">Time (s)</text>
<path d="M1365,1148.6 L1426,1149.2 Q1430,1152 1428.5,1163 Q1430,1172 1426,1177 L1365,1176.8 Z" fill="#b06d26"/>
<path d="M1365,1148.4 L1381.5,1148.6 Q1378,1162 1380.5,1176.6 L1365,1176.6 Z" fill="#f4a0a0"/>
<path d="M1365,1148.3 L1375.5,1148.5 Q1371.5,1162 1374.5,1176.6 L1365,1176.5 Z" fill="#18709a"/>
<path d="M1047.4,942.8 C1048.47,946.77 1052.13,956.55 1053.8,966.6 C1055.47,976.65 1056.18,990.92 1057.4,1003.1 C1058.62,1015.28 1059.73,1028.12 1061.1,1039.7 C1062.47,1051.28 1063.47,1063.47 1065.6,1072.6 C1067.73,1081.73 1070.08,1087.5 1073.9,1094.5 C1077.72,1101.5 1083.02,1109.12 1088.5,1114.6 C1093.98,1120.08 1100.4,1124.35 1106.8,1127.4 C1113.2,1130.45 1116.85,1131.22 1126.9,1132.9 C1136.95,1134.58 1149.92,1136.28 1167.1,1137.5 C1184.28,1138.72 1207.85,1139.08 1230,1140.2 C1252.15,1141.32 1277.08,1142.87 1300,1144.2 C1322.92,1145.53 1356.25,1147.53 1367.5,1148.2 L1367,1176.4 C1355.83,1176.03 1322.83,1175.1 1300,1174.2 C1277.17,1173.3 1252.15,1172.55 1230,1171 C1207.85,1169.45 1184.28,1166.98 1167.1,1164.9 C1149.92,1162.82 1137.57,1161.08 1126.9,1158.5 C1116.23,1155.92 1110.72,1153.97 1103.1,1149.4 C1095.48,1144.83 1087.28,1137.8 1081.2,1131.1 C1075.12,1124.4 1070.1,1116.82 1066.6,1109.2 C1063.1,1101.58 1062.03,1095.47 1060.2,1085.4 C1058.37,1075.33 1056.98,1060.98 1055.6,1048.8 C1054.22,1036.62 1053.12,1024.48 1051.9,1012.3 C1050.68,1000.12 1049.67,986.67 1048.3,975.7 C1046.93,964.73 1044.47,951.37 1043.7,946.5 Z" fill="#77102e" stroke="#77102e" stroke-width="2" stroke-linejoin="round"/>
<circle cx="1045.6" cy="944.6" r="3.2" fill="#77102e"/>
<path d="M1074.4,1093.7 C1076.83,1097.05 1083.52,1108.32 1089,1113.8 C1094.48,1119.28 1100.9,1123.55 1107.3,1126.6 C1113.7,1129.65 1117.35,1130.42 1127.4,1132.1 C1137.45,1133.78 1150.42,1135.48 1167.6,1136.7 C1184.78,1137.92 1208.35,1138.28 1230.5,1139.4 C1252.65,1140.52 1277.58,1142.07 1300.5,1143.4 C1323.42,1144.73 1356.75,1146.73 1368,1147.4" fill="none" stroke="#1d4f73" stroke-width="1" opacity="0.6"/>
<text x="1508" y="891.5" font-size="14.9" font-weight="bold" fill="#11171c">learning_rate vs. accuracy</text>
<text x="1508" y="921.6" font-size="13.4" fill="#454a50">Comparing first 7 runs</text>
<circle cx="1974.7" cy="886.0" r="2.1" fill="#2272b4"/>
<circle cx="1974.7" cy="892.2" r="2.1" fill="#2272b4"/>
<circle cx="1974.7" cy="898.4" r="2.1" fill="#2272b4"/>
<line x1="1561.2" y1="983.8" x2="1993.3" y2="983.8" stroke="#d9dee4" stroke-width="1.2"/>
<line x1="1561.2" y1="1054.7" x2="1993.3" y2="1054.7" stroke="#d9dee4" stroke-width="1.2"/>
<line x1="1561.2" y1="1126.1" x2="1993.3" y2="1126.1" stroke="#d9dee4" stroke-width="1.2"/>
<line x1="1778.3" y1="928" x2="1778.3" y2="1191" stroke="#d9dee4" stroke-width="1.2"/>
<line x1="1965" y1="928" x2="1965" y2="1191" stroke="#d9dee4" stroke-width="1.2"/>
<line x1="1591.3" y1="928" x2="1591.3" y2="1191" stroke="#444" stroke-width="1.3"/>
<text x="1561" y="988.6" font-size="13.6" text-anchor="end" fill="#444">0.87</text>
<text x="1561" y="1059.5" font-size="13.6" text-anchor="end" fill="#444">0.86</text>
<text x="1561" y="1130.9" font-size="13.6" text-anchor="end" fill="#444">0.85</text>
<text x="1591.3" y="1205.3" font-size="13.6" text-anchor="middle" fill="#444">0</text>
<text x="1778.3" y="1205.3" font-size="13.6" text-anchor="middle" fill="#444">0.05</text>
<text x="1965" y="1205.3" font-size="13.6" text-anchor="middle" fill="#444">0.1</text>
<text x="1778.3" y="1242.3" font-size="18.2" text-anchor="middle" fill="#11171c">learning_rate</text>
<text transform="translate(1523,1059.7) rotate(-90)" x="0" y="0" font-size="18.2" text-anchor="middle" fill="#11171c">accuracy</text>
<circle cx="1628.6" cy="948" r="5.6" fill="#f5321e"/>
<circle cx="1965" cy="948" r="5.6" fill="#18709a"/>
<circle cx="1590.5" cy="1059.7" r="5.8" fill="#b06d26"/>
<circle cx="1593" cy="1059.7" r="5.8" fill="#b06d26"/>
<circle cx="1595.5" cy="1059.7" r="5.8" fill="#b06d26"/>
<circle cx="1591.5" cy="1170.4" r="5.6" fill="#77102e"/>
</svg></div>

<!-- window corners -->
<svg class="a" style="left:0;top:1400px" width="2048" height="22" viewBox="0 1400 2048 22"><path d="M0,1412 Q1.5,1419.5 5,1422 L0,1422 Z" fill="#111"/><path d="M2048,1416.5 Q2046.5,1420 2043.5,1422 L2048,1422 Z" fill="#111"/></svg>
</body></html>
